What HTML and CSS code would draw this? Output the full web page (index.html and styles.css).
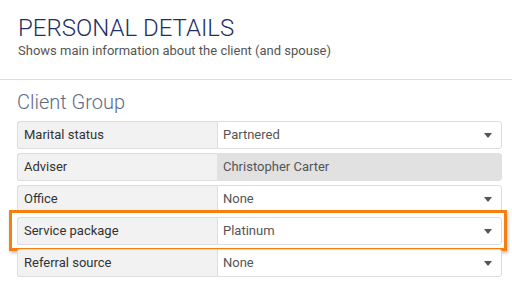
FILE: index.html
```html
<!DOCTYPE html>
<html>
<head>
  <meta name="viewport" content="width=device-width, initial-scale=1.0">
  <link rel="stylesheet" href="styles.css">
</head>
<body>
  <!-- Page Header -->
  <div class="page-header">
    <h1>PERSONAL DETAILS</h1>
    <p>Shows main information about the client (and spouse)</p>
  </div>

  <div class="section">
    <h2>Client Group</h2>

    <div class="field">
      <div class="field-label">Marital status</div>
      <div class="field-value select">Partnered</div>
    </div>

    <div class="field">
      <div class="field-label">Adviser</div>
      <div class="field-value readonly">Christopher Carter</div>
    </div>

    <div class="field">
      <div class="field-label">Office</div>
      <div class="field-value select">None</div>
    </div>

    <div class="field highlighted">
      <div class="field-label">Service package</div>
      <div class="field-value select">Platinum</div>
    </div>

    <div class="field">
      <div class="field-label">Referral source</div>
      <div class="field-value select">None</div>
    </div>
  </div>
</body>
</html>
```

FILE: styles.css
```css
body {
  margin: 0;
  padding: 0;
  background: #fff;
  font-family: Roboto, "Liberation Sans", sans-serif;
  color: #333;
  overflow: hidden;
}

.page-header {
  padding: 14px 18px 0;
  height: 65px;
  border-bottom: 1px solid #ddd;
}

.page-header h1 {
  margin: 0;
  font-size: 24px;
  font-weight: 300;
  line-height: 29px;
  color: #1f2f63;
}

.page-header p {
  margin: 0;
  font-size: 13px;
  line-height: 16px;
  color: #555;
}

.section {
  padding: 10px 10px 0 17px;
}

.section h2 {
  margin: 0 0 7px;
  font-size: 20px;
  font-weight: 300;
  line-height: 24px;
  color: #5d6b85;
}

.field {
  display: flex;
  width: 485px;
  height: 28px;
  margin-bottom: 4px;
  font-size: 13px;
  position: relative;
}

.field-label {
  width: 193px;
  flex-shrink: 0;
  background: #f2f2f2;
  border: 1px solid #ddd;
  border-right: none;
  border-radius: 3px 0 0 3px;
  padding-left: 6px;
  line-height: 25px;
  color: #333;
}

.field-value {
  flex: 1;
  border: 1px solid #ddd;
  border-radius: 0 3px 3px 0;
  padding-left: 5px;
  line-height: 25px;
  color: #555;
  background: #fff;
  position: relative;
}

.field-value.readonly {
  background: #e1e1e1;
  border-color: #e1e1e1;
}

.field-value.select::after {
  content: "";
  position: absolute;
  right: 9px;
  top: 11px;
  border-left: 4px solid transparent;
  border-right: 4px solid transparent;
  border-top: 5px solid #555;
}

/* Orange callout around the service package row */
.field.highlighted::before {
  content: "";
  position: absolute;
  left: -8px;
  right: -5px;
  top: -7px;
  bottom: -6px;
  border: 3px solid #f57f0f;
  box-shadow: 1px 2px 3px rgba(0, 0, 0, 0.25);
  pointer-events: none;
}
```
